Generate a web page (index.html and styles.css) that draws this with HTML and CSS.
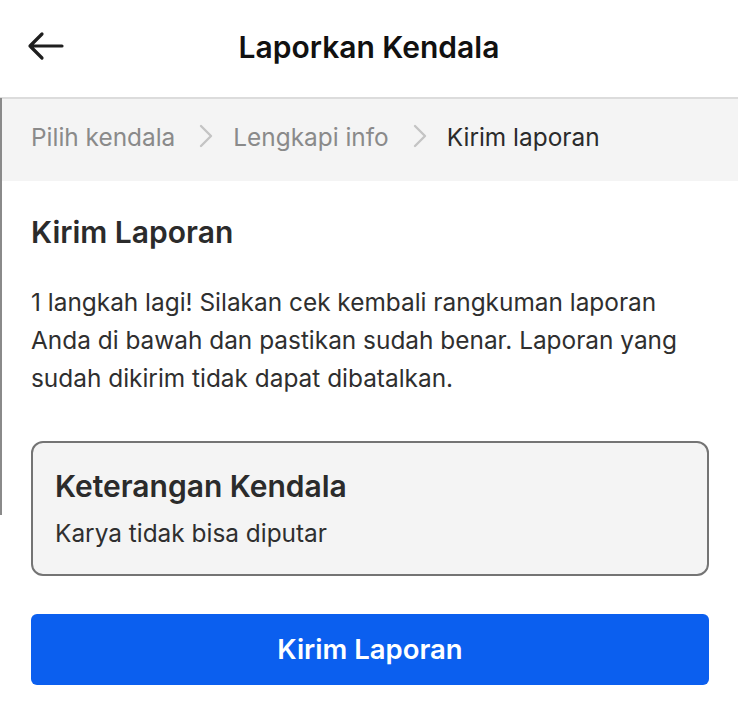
FILE: index.html
```html
<!DOCTYPE html>
<html lang="id">
<head>
	<meta charset="utf-8" />
	<title>Laporkan Kendala</title>
	<link rel="stylesheet" href="styles.css">
</head>
<body>
	<div class="page">
		<header class="topbar">
			<a class="back" href="#">
				<svg width="38" height="32" viewBox="0 0 38 32" fill="none" stroke="#1f1f1f" stroke-width="3.2" stroke-linecap="round" stroke-linejoin="round">
					<path d="M35 16H3M15 4L3 16l12 12"/>
				</svg>
			</a>
			<h1>Laporkan Kendala</h1>
		</header>

		<nav class="steps">
			<span class="step">Pilih kendala</span>
			<span class="chev"><svg width="14" height="24" viewBox="0 0 14 24" fill="none" stroke="#c4c4c4" stroke-width="2.4" stroke-linecap="round" stroke-linejoin="round"><path d="M2 2l10 10-10 10"/></svg></span>
			<span class="step">Lengkapi info</span>
			<span class="chev"><svg width="14" height="24" viewBox="0 0 14 24" fill="none" stroke="#c4c4c4" stroke-width="2.4" stroke-linecap="round" stroke-linejoin="round"><path d="M2 2l10 10-10 10"/></svg></span>
			<span class="step current">Kirim laporan</span>
		</nav>

		<main class="content">
			<h2>Kirim Laporan</h2>
			<p class="intro">1 langkah lagi! Silakan cek kembali rangkuman laporan Anda di bawah dan pastikan sudah benar. Laporan yang sudah dikirim tidak dapat dibatalkan.</p>

			<div class="summary">
				<h3>Keterangan Kendala</h3>
				<p>Karya tidak bisa diputar</p>
			</div>

			<button class="submit">Kirim Laporan</button>
		</main>
	</div>
</body>
</html>
```

FILE: styles.css
```css
html, body {
	margin: 0;
	background: #fff;
}
body {
	font-family: Inter, "Noto Sans", sans-serif;
	color: #2b2b2b;
}
.page {
	position: relative;
	width: 738px;
	height: 726px;
	overflow: hidden;
}
/* thin edge line seen along the left side */
.page::before {
	content: "";
	position: absolute;
	left: 0;
	top: 98px;
	width: 2px;
	height: 417px;
	background: #8a8a8a;
}
.topbar {
	position: relative;
	height: 97px;
	display: flex;
	align-items: center;
	justify-content: center;
}
.back {
	position: absolute;
	left: 27px;
	top: 30px;
	display: block;
	line-height: 0;
}
.topbar h1 {
	margin: 0;
	font-size: 30px;
	font-weight: 600;
	color: #111;
	padding-bottom: 4px;
}
.steps {
	box-sizing: border-box;
	height: 84px;
	border-top: 2px solid #dcdcdc;
	background: #f4f4f4;
	display: flex;
	align-items: center;
	padding: 0 31px 6px;
	font-size: 24.4px;
	color: #8a8a8a;
}
.chev {
	display: flex;
	align-items: center;
	margin: 0 20px 0 24px;
	padding-bottom: 3px;
}
.step.current {
	color: #2b2b2b;
}
.content {
	padding: 30px 29px 0 31px;
}
.content h2 {
	margin: 0;
	font-size: 30px;
	font-weight: 600;
	color: #2b2b2b;
	line-height: 42px;
}
.intro {
	margin: 30px 0 0;
	font-size: 24.4px;
	line-height: 38px;
	color: #2f2f2f;
}
.summary {
	margin-top: 44px;
	height: 135px;
	box-sizing: border-box;
	border: 2px solid #747474;
	border-radius: 12px;
	background: #f4f4f4;
	padding: 25px 22px 0;
}
.summary h3 {
	margin: 0;
	font-size: 30px;
	font-weight: 600;
	line-height: 36px;
	color: #2b2b2b;
}
.summary p {
	margin: 14px 0 0;
	font-size: 24.4px;
	line-height: 30px;
	color: #2f2f2f;
}
.submit {
	display: block;
	width: 100%;
	height: 71px;
	margin-top: 38px;
	border: none;
	border-radius: 6px;
	background: #0b5fef;
	color: #fff;
	font-family: inherit;
	font-size: 27.5px;
	font-weight: 600;
	cursor: pointer;
	padding-bottom: 2px;
}
```
